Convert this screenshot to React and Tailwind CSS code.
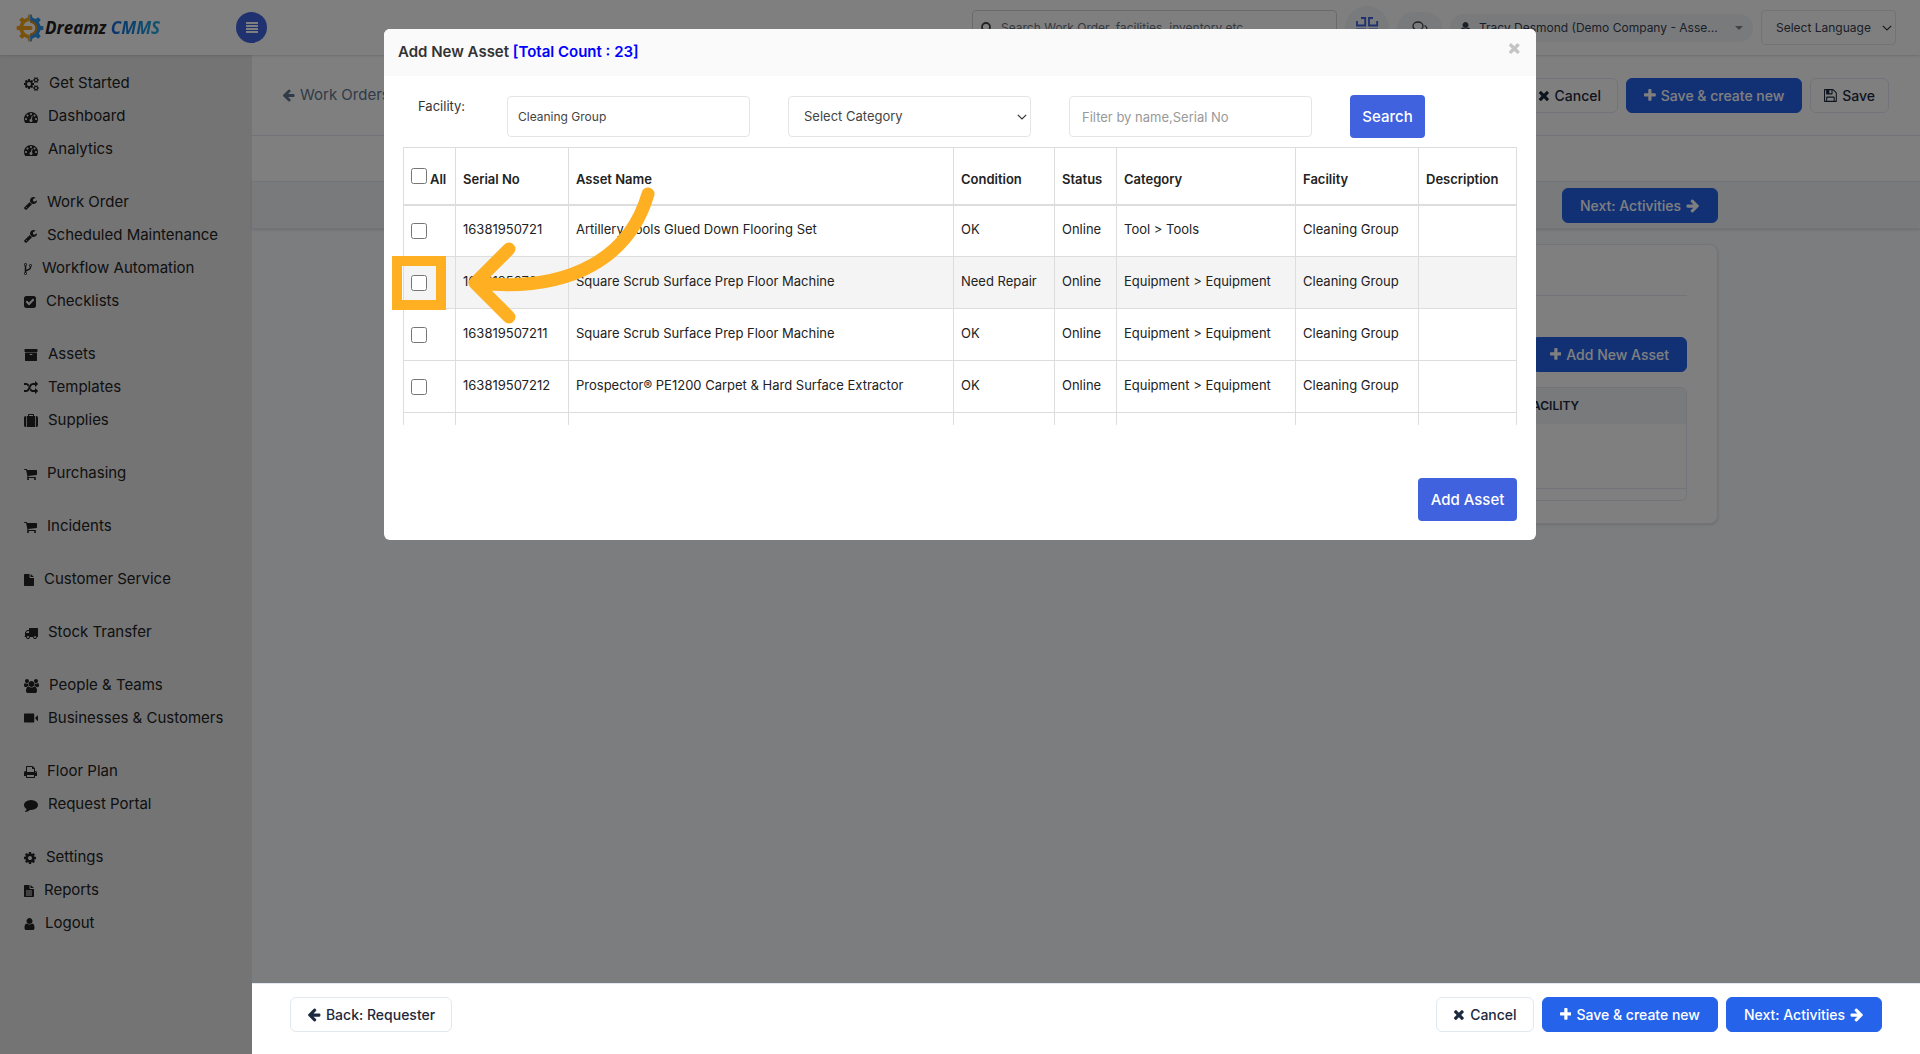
import React from "react";

const ICONS = {
  cogs: ["-64 0 1920 1792", "M832 896q0-106-75-181t-181-75-181 75-75 181 75 181 181 75 181-75 75-181zm768 512q0-52-38-90t-90-38-90 38-38 90q0 53 37.5 90.5t90.5 37.5 90.5-37.5 37.5-90.5zm0-1024q0-52-38-90t-90-38-90 38-38 90q0 53 37.5 90.5t90.5 37.5 90.5-37.5 37.5-90.5zm-384 421v185q0 10-7 19.5t-16 10.5l-155 24q-11 35-32 76 34 48 90 115 7 11 7 20 0 12-7 19-23 30-82.5 89.5t-78.5 59.5q-11 0-21-7l-115-90q-37 19-77 31-11 108-23 155-7 24-30 24h-186q-11 0-20-7.5t-10-17.5l-23-153q-34-10-75-31l-118 89q-7 7-20 7-11 0-21-8-144-133-144-160 0-9 7-19 10-14 41-53t47-61q-23-44-35-82l-152-24q-10-1-17-9.5t-7-19.5v-185q0-10 7-19.5t16-10.5l155-24q11-35 32-76-34-48-90-115-7-11-7-20 0-12 7-20 22-30 82-89t79-59q11 0 21 7l115 90q34-18 77-32 11-108 23-154 7-24 30-24h186q11 0 20 7.5t10 17.5l23 153q34 10 75 31l118-89q8-7 20-7 11 0 21 8 144 133 144 160 0 8-7 19-12 16-42 54t-45 60q23 48 34 82l152 23q10 2 17 10.5t7 19.5zm640 533v140q0 16-149 31-12 27-30 52 51 113 51 138 0 4-4 7-122 71-124 71-8 0-46-47t-52-68q-20 2-30 2t-30-2q-14 21-52 68t-46 47q-2 0-124-71-4-3-4-7 0-25 51-138-18-25-30-52-149-15-149-31v-140q0-16 149-31 13-29 30-52-51-113-51-138 0-4 4-7 4-2 35-20t59-34 30-16q8 0 46 46.5t52 67.5q20-2 30-2t30 2q51-71 92-112l6-2q4 0 124 70 4 3 4 7 0 25-51 138 17 23 30 52 149 15 149 31zm0-1024v140q0 16-149 31-12 27-30 52 51 113 51 138 0 4-4 7-122 71-124 71-8 0-46-47t-52-68q-20 2-30 2t-30-2q-14 21-52 68t-46 47q-2 0-124-71-4-3-4-7 0-25 51-138-18-25-30-52-149-15-149-31v-140q0-16 149-31 13-29 30-52-51-113-51-138 0-4 4-7 4-2 35-20t59-34 30-16q8 0 46 46.5t52 67.5q20-2 30-2t30 2q51-71 92-112l6-2q4 0 124 70 4 3 4 7 0 25-51 138 17 23 30 52 149 15 149 31z"],
  gauge: ["0 0 1792 1792", "M384 1152q0-53-37.5-90.5t-90.5-37.5-90.5 37.5-37.5 90.5 37.5 90.5 90.5 37.5 90.5-37.5 37.5-90.5zm192-448q0-53-37.5-90.5t-90.5-37.5-90.5 37.5-37.5 90.5 37.5 90.5 90.5 37.5 90.5-37.5 37.5-90.5zm428 481l101-382q6-26-7.5-48.5t-38.5-29.5-48 6.5-30 39.5l-101 382q-60 5-107 43.5t-63 98.5q-20 77 20 146t117 89 146-20 89-117q16-60-6-117t-72-91zm660-33q0-53-37.5-90.5t-90.5-37.5-90.5 37.5-37.5 90.5 37.5 90.5 90.5 37.5 90.5-37.5 37.5-90.5zm-640-640q0-53-37.5-90.5t-90.5-37.5-90.5 37.5-37.5 90.5 37.5 90.5 90.5 37.5 90.5-37.5 37.5-90.5zm448 192q0-53-37.5-90.5t-90.5-37.5-90.5 37.5-37.5 90.5 37.5 90.5 90.5 37.5 90.5-37.5 37.5-90.5zm320 448q0 261-141 483-19 29-54 29h-1402q-35 0-54-29-141-221-141-483 0-182 71-348t191-286 286-191 348-71 348 71 286 191 191 286 71 348z"],
  wrench: ["64 0 1664 1792", "M448 1472q0-26-19-45t-45-19-45 19-19 45 19 45 45 19 45-19 19-45zm644-420l-682 682q-37 37-90 37-52 0-91-37l-106-108q-38-36-38-90 0-53 38-91l681-681q39 98 114.5 173.5t173.5 114.5zm634-435q0 39-23 106-47 134-164.5 217.5t-258.5 83.5q-185 0-316.5-131.5t-131.5-316.5 131.5-316.5 316.5-131.5q58 0 121.5 16.5t107.5 46.5q16 11 16 28t-16 28l-293 169v224l193 107q5-3 79-48.5t135.5-81 70.5-35.5q15 0 23.5 10t8.5 25z"],
  fork: ["384 0 1024 1792", "M672 1472q0-40-28-68t-68-28-68 28-28 68 28 68 68 28 68-28 28-68zm0-1152q0-40-28-68t-68-28-68 28-28 68 28 68 68 28 68-28 28-68zm640 128q0-40-28-68t-68-28-68 28-28 68 28 68 68 28 68-28 28-68zm96 0q0 52-26 96.5t-70 69.5q-2 287-226 414-67 38-203 81-128 40-169.5 71t-41.5 100v26q44 25 70 69.5t26 96.5q0 80-56 136t-136 56-136-56-56-136q0-52 26-96.5t70-69.5v-820q-44-25-70-69.5t-26-96.5q0-80 56-136t136-56 136 56 56 136q0 52-26 96.5t-70 69.5v497q54-26 154-57 55-17 87.5-29.5t70.5-31 59-39.5 40.5-51 28-69.5 8.5-91.5q-44-25-70-69.5t-26-96.5q0-80 56-136t136-56 136 56 56 136z"],
  check: ["128 0 1536 1792", "M813 1299l614-614q19-19 19-45t-19-45l-102-102q-19-19-45-19t-45 19l-467 467-211-211q-19-19-45-19t-45 19l-102 102q-19 19-19 45t19 45l358 358q19 19 45 19t45-19zm851-883v960q0 119-84.5 203.5t-203.5 84.5h-960q-119 0-203.5-84.5t-84.5-203.5v-960q0-119 84.5-203.5t203.5-84.5h960q119 0 203.5 84.5t84.5 203.5z"],
  archive: ["0 0 1792 1792", "M1088 832q0-26-19-45t-45-19h-256q-26 0-45 19t-19 45 19 45 45 19h256q26 0 45-19t19-45zm576-192v960q0 26-19 45t-45 19h-1408q-26 0-45-19t-19-45v-960q0-26 19-45t45-19h1408q26 0 45 19t19 45zm64-448v256q0 26-19 45t-45 19h-1536q-26 0-45-19t-19-45v-256q0-26 19-45t45-19h1536q26 0 45 19t19 45z"],
  random: ["0 0 1792 1792", "M666 481q-60 92-137 273-22-45-37-72.5t-40.5-63.5-51-56.5-63-35-81.5-14.5h-224q-14 0-23-9t-9-23v-192q0-14 9-23t23-9h224q250 0 410 225zm1126 799q0 14-9 23l-320 320q-9 9-23 9-13 0-22.5-9.5t-9.5-22.5v-192q-32 0-85 .5t-81 1-73-1-71-5-64-10.5-63-18.5-58-28.5-59-40-55-53.5-56-69.5q59-93 136-273 22 45 37 72.5t40.5 63.5 51 56.5 63 35 81.5 14.5h256v-192q0-14 9-23t23-9q12 0 24 10l319 319q9 9 9 23zm0-896q0 14-9 23l-320 320q-9 9-23 9-13 0-22.5-9.5t-9.5-22.5v-192h-256q-48 0-87 15t-69 45-51 61.5-45 77.5q-32 62-78 171-29 66-49.5 111t-54 105-64 100-74 83-90 68.5-106.5 42-128 16.5h-224q-14 0-23-9t-9-23v-192q0-14 9-23t23-9h224q48 0 87-15t69-45 51-61.5 45-77.5q32-62 78-171 29-66 49.5-111t54-105 64-100 74-83 90-68.5 106.5-42 128-16.5h256v-192q0-14 9-23t23-9q12 0 24 10l319 319q9 9 9 23z"],
  suitcase: ["0 0 1792 1792", "M640 256h512v-128h-512v128zm-352 0v1408h-64q-92 0-158-66t-66-158v-960q0-92 66-158t158-66h64zm1120 0v1408h-1024v-1408h128v-160q0-40 28-68t68-28h576q40 0 68 28t28 68v160h128zm384 224v960q0 92-66 158t-158 66h-64v-1408h64q92 0 158 66t66 158z"],
  cart: ["64 0 1664 1792", "M704 1536q0 52-38 90t-90 38-90-38-38-90 38-90 90-38 90 38 38 90zm896 0q0 52-38 90t-90 38-90-38-38-90 38-90 90-38 90 38 38 90zm128-1088v512q0 24-16.5 42.5t-40.5 21.5l-1044 122q13 60 13 70 0 16-24 64h920q26 0 45 19t19 45-19 45-45 19h-1024q-26 0-45-19t-19-45q0-11 8-31.5t16-36 21.5-40 15.5-29.5l-177-823h-204q-26 0-45-19t-19-45 19-45 45-19h256q16 0 28.5 6.5t19.5 15.5 13 24.5 8 26 5.5 29.5 4.5 26h1201q26 0 45 19t19 45z"],
  file: ["0 0 1280 1792", "M0 224q0-96 96-96h608v416q0 96 96 96h480v928q0 96-96 96h-1088q-96 0-96-96zM832 128l448 384h-448z"],
  fileText: ["0 0 1280 1792", "M0 224q0-96 96-96h608v416q0 96 96 96h480v928q0 96-96 96h-1088q-96 0-96-96zM832 128l448 384h-448zM256 832v128h768v-128zM256 1088v128h768v-128zM256 1344v128h768v-128z"],
  truck: ["0 0 1792 1792", "M640 1408q0-52-38-90t-90-38-90 38-38 90 38 90 90 38 90-38 38-90zm-384-512h384v-256h-158q-13 0-22 9l-195 195q-9 9-9 22v30zm1280 512q0-52-38-90t-90-38-90 38-38 90 38 90 90 38 90-38 38-90zm256-1088v1024q0 15-4 26.5t-13.5 18.5-16.5 11.5-23.5 6-22.5 2-25.5 0-22.5-.5q0 106-75 181t-181 75-181-75-75-181h-384q0 106-75 181t-181 75-181-75-75-181h-64q-3 0-22.5.5t-25.5 0-22.5-2-23.5-6-16.5-11.5-13.5-18.5-4-26.5q0-26 19-45t45-19v-320q0-8-.5-35t0-38 2.5-34.5 6.5-37 14-30.5 22.5-30l198-198q19-19 50.5-32t58.5-13h160v-192q0-26 19-45t45-19h1024q26 0 45 19t19 45z"],
  users: ["-64 0 1920 1792", "M529 896q-162 5-265 128h-134q-82 0-138-40.5t-56-118.5q0-353 124-353 6 0 43.5 21t97.5 42.5 119 21.5q67 0 133-23-5 37-5 66 0 139 81 256zm1071 637q0 120-73 189.5t-194 69.5h-874q-121 0-194-69.5t-73-189.5q0-53 3.5-103.5t14-109 26.5-108.5 43-97.5 62-81 85.5-53.5 111.5-20q10 0 43 21.5t73 48 107 48 135 21.5 135-21.5 107-48 73-48 43-21.5q61 0 111.5 20t85.5 53.5 62 81 43 97.5 26.5 108.5 14 109 3.5 103.5zm-1024-1277q0 106-75 181t-181 75-181-75-75-181 75-181 181-75 181 75 75 181zm704 384q0 159-112.5 271.5t-271.5 112.5-271.5-112.5-112.5-271.5 112.5-271.5 271.5-112.5 271.5 112.5 112.5 271.5zm576 225q0 78-56 118.5t-138 40.5h-134q-103-123-265-128 81-117 81-256 0-29-5-66 66 23 133 23 59 0 119-21.5t97.5-42.5 43.5-21q124 0 124 353zm-128-609q0 106-75 181t-181 75-181-75-75-181 75-181 181-75 181 75 75 181z"],
  video: ["0 0 1792 1792", "M0 288q0-96 96-96h1120q96 0 96 96v960q0 96-96 96h-1120q-96 0-96-96zM1408 768l320-320h64v704h-64z"],
  print: ["64 0 1664 1792", "M448 1536h896v-256h-896v256zm0-640h896v-384h-160q-40 0-68-28t-28-68v-160h-640v640zm1152 64q0-26-19-45t-45-19-45 19-19 45 19 45 45 19 45-19 19-45zm128 0v416q0 13-9.5 22.5t-22.5 9.5h-224v160q0 40-28 68t-68 28h-960q-40 0-68-28t-28-68v-160h-224q-13 0-22.5-9.5t-9.5-22.5v-416q0-79 56.5-135.5t135.5-56.5h64v-544q0-40 28-68t68-28h672q40 0 88 20t76 48l152 152q28 28 48 76t20 88v256h64q79 0 135.5 56.5t56.5 135.5z"],
  comment: ["0 0 1792 1792", "M1792 896q0 174-120 321.5t-326 233-450 85.5q-70 0-145-8-198 175-460 242-49 14-114 22-17 2-30.5-9t-17.5-29v-1q-3-4-.5-12t2-10 4.5-9.5l6-9 7-8.5 8-9q7-8 31-34.5t34.5-38 31-39.5 32.5-51 27-59 26-76q-157-89-247.5-220t-90.5-281q0-130 71-248.5t191-204.5 286-136.5 348-50.5q244 0 450 85.5t326 233 120 321.5z"],
  cog: ["128 0 1536 1792", "M1152 896q0-106-75-181t-181-75-181 75-75 181 75 181 181 75 181-75 75-181zm512-109v222q0 12-8 23t-20 13l-185 28q-19 54-39 91 35 50 107 138 10 12 10 25t-9 23q-27 37-99 108t-94 71q-12 0-26-9l-138-108q-44 23-91 38-16 136-29 186-7 28-36 28h-222q-14 0-24.5-8.5t-11.5-21.5l-28-184q-49-16-90-37l-141 107q-10 9-25 9-14 0-25-11-126-114-165-168-7-10-7-23 0-12 8-23 15-21 51-66.5t54-70.5q-27-50-41-99l-183-27q-13-2-21-12.5t-8-23.5v-222q0-12 8-23t19-13l186-28q14-46 39-92-40-57-107-138-10-12-10-24 0-10 9-23 26-36 98.5-107.5t94.5-71.5q13 0 26 10l138 107q44-23 91-38 16-136 29-186 7-28 36-28h222q14 0 24.5 8.5t11.5 21.5l28 184q49 16 90 37l142-107q9-9 24-9 13 0 25 10 129 119 165 170 7 8 7 22 0 12-8 23-15 21-51 66.5t-54 70.5q26 50 41 98l183 28q13 2 21 12.5t8 23.5z"],
  user: ["192 0 1408 1792", "M1536 1399q0 109-62.5 187t-150.5 78h-854q-88 0-150.5-78t-62.5-187q0-85 8.5-160.5t31.5-152 58.5-131 94-89 134.5-34.5q131 128 313 128t313-128q76 0 134.5 34.5t94 89 58.5 131 31.5 152 8.5 160.5zm-256-887q0 159-112.5 271.5t-271.5 112.5-271.5-112.5-112.5-271.5 112.5-271.5 271.5-112.5 271.5 112.5 112.5 271.5z"],
  left: ["64 0 1664 1792", "M1664 896v128q0 53-32.5 90.5t-84.5 37.5h-704l293 294q38 36 38 90t-38 90l-75 76q-37 37-90 37-52 0-91-37l-651-652q-37-37-37-90 0-52 37-91l651-650q38-38 91-38 52 0 90 38l75 74q38 38 38 91t-38 91l-293 293h704q52 0 84.5 37.5t32.5 90.5z"],
  right: ["64 0 1664 1792", "M1600 960q0 54-37 91l-651 651q-39 37-91 37-51 0-90-37l-75-75q-38-38-38-91t38-91l293-293h-704q-52 0-84.5-37.5t-32.5-90.5v-128q0-53 32.5-90.5t84.5-37.5h704l-293-294q-38-36-38-90t38-90l75-75q38-38 90-38 53 0 91 38l651 651q37 35 37 90z"],
  plus: ["192 0 1408 1792", "M1600 736v192q0 40-28 68t-68 28h-416v416q0 40-28 68t-68 28h-192q-40 0-68-28t-28-68v-416h-416q-40 0-68-28t-28-68v-192q0-40 28-68t68-28h416v-416q0-40 28-68t68-28h192q40 0 68 28t28 68v416h416q40 0 68 28t28 68z"],
  times: ["192 0 1408 1792", "M1490 1322q0 40-28 68l-136 136q-28 28-68 28t-68-28l-294-294-294 294q-28 28-68 28t-68-28l-136-136q-28-28-28-68t28-68l294-294-294-294q-28-28-28-68t28-68l136-136q28-28 68-28t68 28l294 294 294-294q28-28 68-28t68 28l136 136q28 28 28 68t-28 68l-294 294 294 294q28 28 28 68z"],
  save: ["128 0 1536 1792", "M512 1536h768v-384h-768v384zm896 0h128v-896q0-14-10-38.5t-20-34.5l-281-281q-10-10-34-20t-39-10v416q0 40-28 68t-68 28h-576q-40 0-68-28t-28-68v-416h-128v1280h128v-416q0-40 28-68t68-28h832q40 0 68 28t28 68v416zm-384-928v-320q0-13-9.5-22.5t-22.5-9.5h-192q-13 0-22.5 9.5t-9.5 22.5v320q0 13 9.5 22.5t22.5 9.5h192q13 0 22.5-9.5t9.5-22.5zm640 32v928q0 40-28 68t-68 28h-1344q-40 0-68-28t-28-68v-1344q0-40 28-68t68-28h928q40 0 88 20t76 48l280 280q28 28 48 76t20 88z"],
};

function Icon({ name, className = "h-3.5" }) {
  const [viewBox, d] = ICONS[name];
  return (
    <svg viewBox={viewBox} fill="currentColor" fillRule="evenodd" className={`w-auto shrink-0 ${className}`} aria-hidden="true">
      <path d={d} />
    </svg>
  );
}

const MENU = [
  [["cogs", "Get Started"], ["gauge", "Dashboard"], ["gauge", "Analytics"]],
  [["wrench", "Work Order"], ["wrench", "Scheduled Maintenance"], ["fork", "Workflow Automation"], ["check", "Checklists"]],
  [["archive", "Assets"], ["random", "Templates"], ["suitcase", "Supplies"]],
  [["cart", "Purchasing"]],
  [["cart", "Incidents"]],
  [["file", "Customer Service"]],
  [["truck", "Stock Transfer"]],
  [["users", "People & Teams"], ["video", "Businesses & Customers"]],
  [["print", "Floor Plan"], ["comment", "Request Portal"]],
  [["cog", "Settings"], ["fileText", "Reports"], ["user", "Logout"]],
];

const ROWS = [
  ["16381950721", "Artillery Tools Glued Down Flooring Set", "OK", "Online", "Tool > Tools", "Cleaning Group", ""],
  ["163819507210", "Square Scrub Surface Prep Floor Machine", "Need Repair", "Online", "Equipment > Equipment", "Cleaning Group", ""],
  ["163819507211", "Square Scrub Surface Prep Floor Machine", "OK", "Online", "Equipment > Equipment", "Cleaning Group", ""],
  ["163819507212", "Prospector® PE1200 Carpet & Hard Surface Extractor", "OK", "Online", "Equipment > Equipment", "Cleaning Group", ""],
];

const COLUMNS = ["Serial No", "Asset Name", "Condition", "Status", "Category", "Facility", "Description"];

function Button({ primary, pad = primary ? "px-[17px]" : "px-4", children }) {
  const tone = primary ? "border-[#2563eb] bg-[#2563eb] text-white" : "border-slate-200 bg-white text-slate-800";
  return (
    <button type="button" className={`flex h-[35px] items-center gap-[5px] rounded-md border text-[14px] font-medium whitespace-nowrap ${pad} ${tone}`}>
      {children}
    </button>
  );
}

function Chevron({ className }) {
  return (
    <svg viewBox="0 0 10 6" className={`pointer-events-none absolute h-1.5 w-2.5 ${className}`} fill="none" stroke="#333" strokeWidth="1.2" aria-hidden="true">
      <path d="M.8.8 5 5 9.2.8" />
    </svg>
  );
}

const TEETH = [0, 45, 90, 135, 180, 225, 270, 315];

function Gear({ color, clip }) {
  return (
    <g clipPath={`url(#${clip})`}>
      <circle cx="14" cy="14" r="8.8" fill="none" stroke={color} strokeWidth="3.6" />
      {TEETH.map((angle) => (
        <path key={angle} d="M11.400 4.500 12.200.6h3.600l.8 3.900z" fill={color} transform={`rotate(${angle} 14 14)`} />
      ))}
    </g>
  );
}

function Logo() {
  return (
    <a href="#home" className="flex items-center gap-px" aria-label="Dreamz CMMS">
      <svg viewBox="0 0 28 28" className="size-7" aria-hidden="true">
        <clipPath id="gear-left"><path d="M0 0h13.800v28H0z" /></clipPath>
        <clipPath id="gear-right"><path d="M14.200 0H28v28H14.200z" /></clipPath>
        <Gear color="#f2a51e" clip="gear-left" />
        <Gear color="#2b97e8" clip="gear-right" />
        <path d="M14 7.600a6.400 6.400 0 0 1 0 12.800" fill="none" stroke="#d98a1c" strokeWidth="2.200" />
        <path d="M7 12h7.500a2 2 0 0 1 0 4H7z" fill="#f2a51e" />
      </svg>
      <span className="font-['Open_Sans',sans-serif] text-[17px] leading-6 font-bold text-[#222] italic">
        Dreamz <span className="bg-gradient-to-r from-[#1668d8] to-[#27a9e0] bg-clip-text text-transparent">CMMS</span>
      </span>
    </a>
  );
}

function Header() {
  return (
    <header className="relative z-10 flex h-[55px] shrink-0 items-center justify-between bg-white pr-6 pl-4 shadow-sm">
      <div className="flex items-center">
        <div className="w-[220px]"><Logo /></div>
        <button type="button" aria-label="Toggle menu" className="flex size-[31px] items-center justify-center rounded-full bg-[#4062de] text-white">
          <svg viewBox="0 0 12 11" className="h-[11px] w-3" fill="currentColor" aria-hidden="true">
            <path d="M0 0h12v2H0zM0 3h12v2H0zM0 6h12v2H0zM0 9h12v2H0z" />
          </svg>
        </button>
      </div>
      <div className="flex items-center gap-2">
        <label className="flex h-[35px] w-[365px] items-center gap-2 rounded border border-gray-300 pl-2">
          <svg viewBox="0 0 12 12" className="size-3" fill="none" stroke="#444" strokeWidth="1.8" aria-hidden="true">
            <circle cx="5" cy="5" r="4" /><path d="m8 8 3.5 3.5" />
          </svg>
          <span className="sr-only">Search</span>
          <input type="search" placeholder="Search Work Order, facilities, inventory etc" className="min-w-0 flex-1 text-[12px] placeholder:text-gray-500 focus:outline-none" />
        </label>
        <button type="button" aria-label="Apps" className="flex size-11 items-center justify-center rounded-full bg-gray-100">
          <svg viewBox="0 0 24 24" className="size-6" fill="none" stroke="#4062de" strokeWidth="1.8" aria-hidden="true">
            <path d="M2 5v4.500h8.200V2H6M18 2h-4v7.500h8.200V5M14 13.500h9M2 22v-8.500h8.200V22" />
          </svg>
        </button>
        <button type="button" aria-label="Messages" className="flex h-8 w-[45px] items-center justify-center rounded-full bg-gray-100">
          <svg viewBox="0 0 16 14" className="h-3.5 w-4" fill="none" stroke="#444" strokeWidth="1.3" aria-hidden="true">
            <path d="M6 1c3 0 5 1.800 5 4S9 9 6 9l-3 1.500.5-2C2 8 1 6.500 1 5c0-2.200 2-4 5-4zM12.500 4.500c3 1.500 3 4 1 5.500l.5 2-3-1.200c-1.500.2-2.500 0-3.500-.5" />
          </svg>
        </button>
        <button type="button" className="flex h-7 w-[303px] items-center justify-between rounded-full bg-gray-100 px-2.5 text-[12px] whitespace-nowrap text-gray-700">
          <span className="flex items-center gap-2"><Icon name="user" />Tracy Desmond (Demo Company - Asse...</span>
          <svg viewBox="0 0 8 4" className="h-1 w-2" fill="#888" aria-hidden="true"><path d="M0 0h8L4 4z" /></svg>
        </button>
        <div className="relative">
          <select aria-label="Language" className="h-[35px] w-[135px] appearance-none rounded border border-gray-200 bg-white pl-3.5 text-[12px] text-gray-700">
            <option>Select Language</option>
          </select>
          <Chevron className="top-[15px] right-1" />
        </div>
      </div>
    </header>
  );
}

function Sidebar() {
  return (
    <nav className="flex w-[252px] shrink-0 flex-col gap-5 bg-[#e8e8ea] px-6 pt-3 text-[#222]">
      {MENU.map((group) => (
        <ul key={group[0][1]}>
          {group.map(([icon, label]) => (
            <li key={label}>
              <a href={`#${icon}`} className="flex h-[33px] items-center gap-2.5 text-[15px] whitespace-nowrap">
                <Icon name={icon} />
                {label}
              </a>
            </li>
          ))}
        </ul>
      ))}
    </nav>
  );
}

function Workspace() {
  return (
    <main className="min-w-0 flex-1 bg-slate-50">
      <div className="flex h-[81px] items-center justify-between border-b border-slate-200 bg-white pr-[31px] pl-[30px]">
        <a href="#work-orders" className="flex items-center gap-[5px] text-[15px] text-slate-500"><Icon name="left" />Work Orders</a>
        <div className="flex gap-2">
          <Button><Icon name="times" className="h-[15px]" />Cancel</Button>
          <Button primary><Icon name="plus" className="h-[15px]" />Save &amp; create new</Button>
          <Button pad="px-[13px]"><Icon name="save" className="h-[15px]" />Save</Button>
        </div>
      </div>
      <div className="h-[45px] bg-white" />
      <div className="border-y border-slate-200 bg-slate-100 shadow-sm">
        <div className="mx-auto flex h-[46px] w-full max-w-[1264px] items-center justify-end">
          <Button primary>Next: Activities<Icon name="right" className="h-[15px]" /></Button>
        </div>
      </div>
      <section className="mx-auto mt-[15px] w-full max-w-[1264px] rounded-lg border border-slate-200 bg-white px-[30px] pb-[22px] shadow-sm">
        <div className="h-[51px] border-b border-slate-200" />
        <div className="flex justify-end pt-[41px] pb-[15px]">
          <Button primary><Icon name="plus" className="h-[15px]" />Add New Asset</Button>
        </div>
        <div className="overflow-hidden rounded-md border border-slate-200">
          <table className="w-full text-left text-xs text-slate-800">
            <thead>
              <tr className="h-9 bg-slate-100">
                <th className="w-[1040px]"><span className="sr-only">Name</span></th>
                <th className="font-semibold">FACILITY</th>
              </tr>
            </thead>
            <tbody>
              <tr className="h-16 border-b border-slate-200"><td /><td /></tr>
              <tr className="h-3"><td /><td /></tr>
            </tbody>
          </table>
        </div>
      </section>
    </main>
  );
}

function AssetTable() {
  const cell = "border border-[#ddd] px-[7px]";
  return (
    <div className="h-[278px] overflow-hidden">
      <table className="w-full border-collapse text-left text-[13px] leading-5 text-[#222]">
        <colgroup>
          <col className="w-[52px]" /><col className="w-[113px]" /><col className="w-[385px]" /><col className="w-[101px]" />
          <col className="w-[62px]" /><col className="w-[179px]" /><col className="w-[123px]" /><col />
        </colgroup>
        <thead>
          <tr className="h-[57px] border-b-2 border-[#ddd]">
            <th className={`${cell} pt-1.5 pr-0`}>
              <label className="flex items-start gap-[3px] font-semibold">
                <input type="checkbox" className="size-4 shrink-0" />
                <span className="pt-px">All</span>
              </label>
            </th>
            {COLUMNS.map((name) => (
              <th key={name} className={`${cell} pt-1.5 font-semibold whitespace-nowrap`}>{name}</th>
            ))}
          </tr>
        </thead>
        <tbody>
          {ROWS.map((row, i) => (
            <tr key={row[0]} className={i === 1 ? "h-[52px] bg-[#f4f4f4]" : "h-[52px]"}>
              <td className={cell}>
                <input type="checkbox" aria-label={`Select ${row[0]}`} className="block size-4" />
              </td>
              {row.map((value, c) => (
                <td key={COLUMNS[c]} className={`${cell} pb-1 whitespace-nowrap`}>{value}</td>
              ))}
            </tr>
          ))}
          <tr className="h-[52px]">
            <td className={cell} />
            {COLUMNS.map((name) => <td key={name} className={cell} />)}
          </tr>
        </tbody>
      </table>
    </div>
  );
}

function AssetDialog() {
  const field = "h-[41px] w-[243px] rounded border border-[#e5e5e5] bg-white text-[#444]";
  const action = "h-[43px] rounded bg-[#4062de] pt-px text-[15px] font-medium text-white";
  return (
    <div className="fixed inset-0 z-20 bg-black/50 pt-[29px]">
      <div role="dialog" aria-label="Add New Asset" className="relative mx-auto w-3/5 rounded-md bg-white">
        <div className="flex h-[47px] items-center justify-between rounded-t-md bg-[#fafafa] px-3.5">
          <h2 className="text-[15px] font-semibold text-[#333]">Add New Asset <span className="text-[#0000ff]">[Total Count : 23]</span></h2>
          <button type="button" aria-label="Close" className="mb-2.5 flex w-4 justify-center text-[#c4c4c4]"><Icon name="times" className="h-4" /></button>
        </div>
        <div className="px-[19px] pt-[19px] pb-[19px]">
          <div className="mb-[9px] flex items-center gap-[38px] pl-[15px]">
            <div className="flex items-start">
              <label htmlFor="facility" className="w-[89px] text-[13px] leading-5 text-[#333]">Facility:</label>
              <input id="facility" type="text" defaultValue="Cleaning Group" className={`${field} px-2.5 text-[12px]`} />
            </div>
            <div className="relative">
              <select aria-label="Category" className={`${field} appearance-none px-[15px] text-[13px]`}>
                <option>Select Category</option>
              </select>
              <Chevron className="top-[18px] right-1" />
            </div>
            <input type="text" aria-label="Filter" placeholder="Filter by name,Serial No" className={`${field} px-3 text-[13px] placeholder:text-[#999]`} />
            <button type="button" className={`${action} w-[75px]`}>Search</button>
          </div>
          <AssetTable />
          <div className="mt-[53px] flex justify-end">
            <button type="button" className={`${action} w-[99px]`}>Add Asset</button>
          </div>
        </div>
        <div className="pointer-events-none absolute top-[227px] left-2 size-[54px] border-[10px] border-[#feb022]" />
        <svg viewBox="0 0 200 150" className="pointer-events-none absolute top-[152px] left-[76px] h-[150px] w-[200px]" fill="none" stroke="#feb022" strokeWidth="13" strokeLinecap="round" strokeLinejoin="round" aria-hidden="true">
          <path d="M188 13C170 75 112 112 18 102M49 68 15 102l34 34" />
        </svg>
      </div>
    </div>
  );
}

export default function App() {
  return (
    <div className="flex min-h-screen flex-col font-['Inter',sans-serif]">
      <Header />
      <div className="flex flex-1">
        <Sidebar />
        <div className="flex min-w-0 flex-1 flex-col">
          <Workspace />
          <footer className="relative z-30 flex h-[71px] shrink-0 items-start justify-between border-t border-slate-200 bg-white px-[38px] pt-[13px]">
            <Button><Icon name="left" className="h-[15px]" />Back: Requester</Button>
            <div className="flex gap-2">
              <Button><Icon name="times" className="h-[15px]" />Cancel</Button>
              <Button primary><Icon name="plus" className="h-[15px]" />Save &amp; create new</Button>
              <Button primary>Next: Activities<Icon name="right" className="h-[15px]" /></Button>
            </div>
          </footer>
        </div>
      </div>
      <AssetDialog />
    </div>
  );
}
